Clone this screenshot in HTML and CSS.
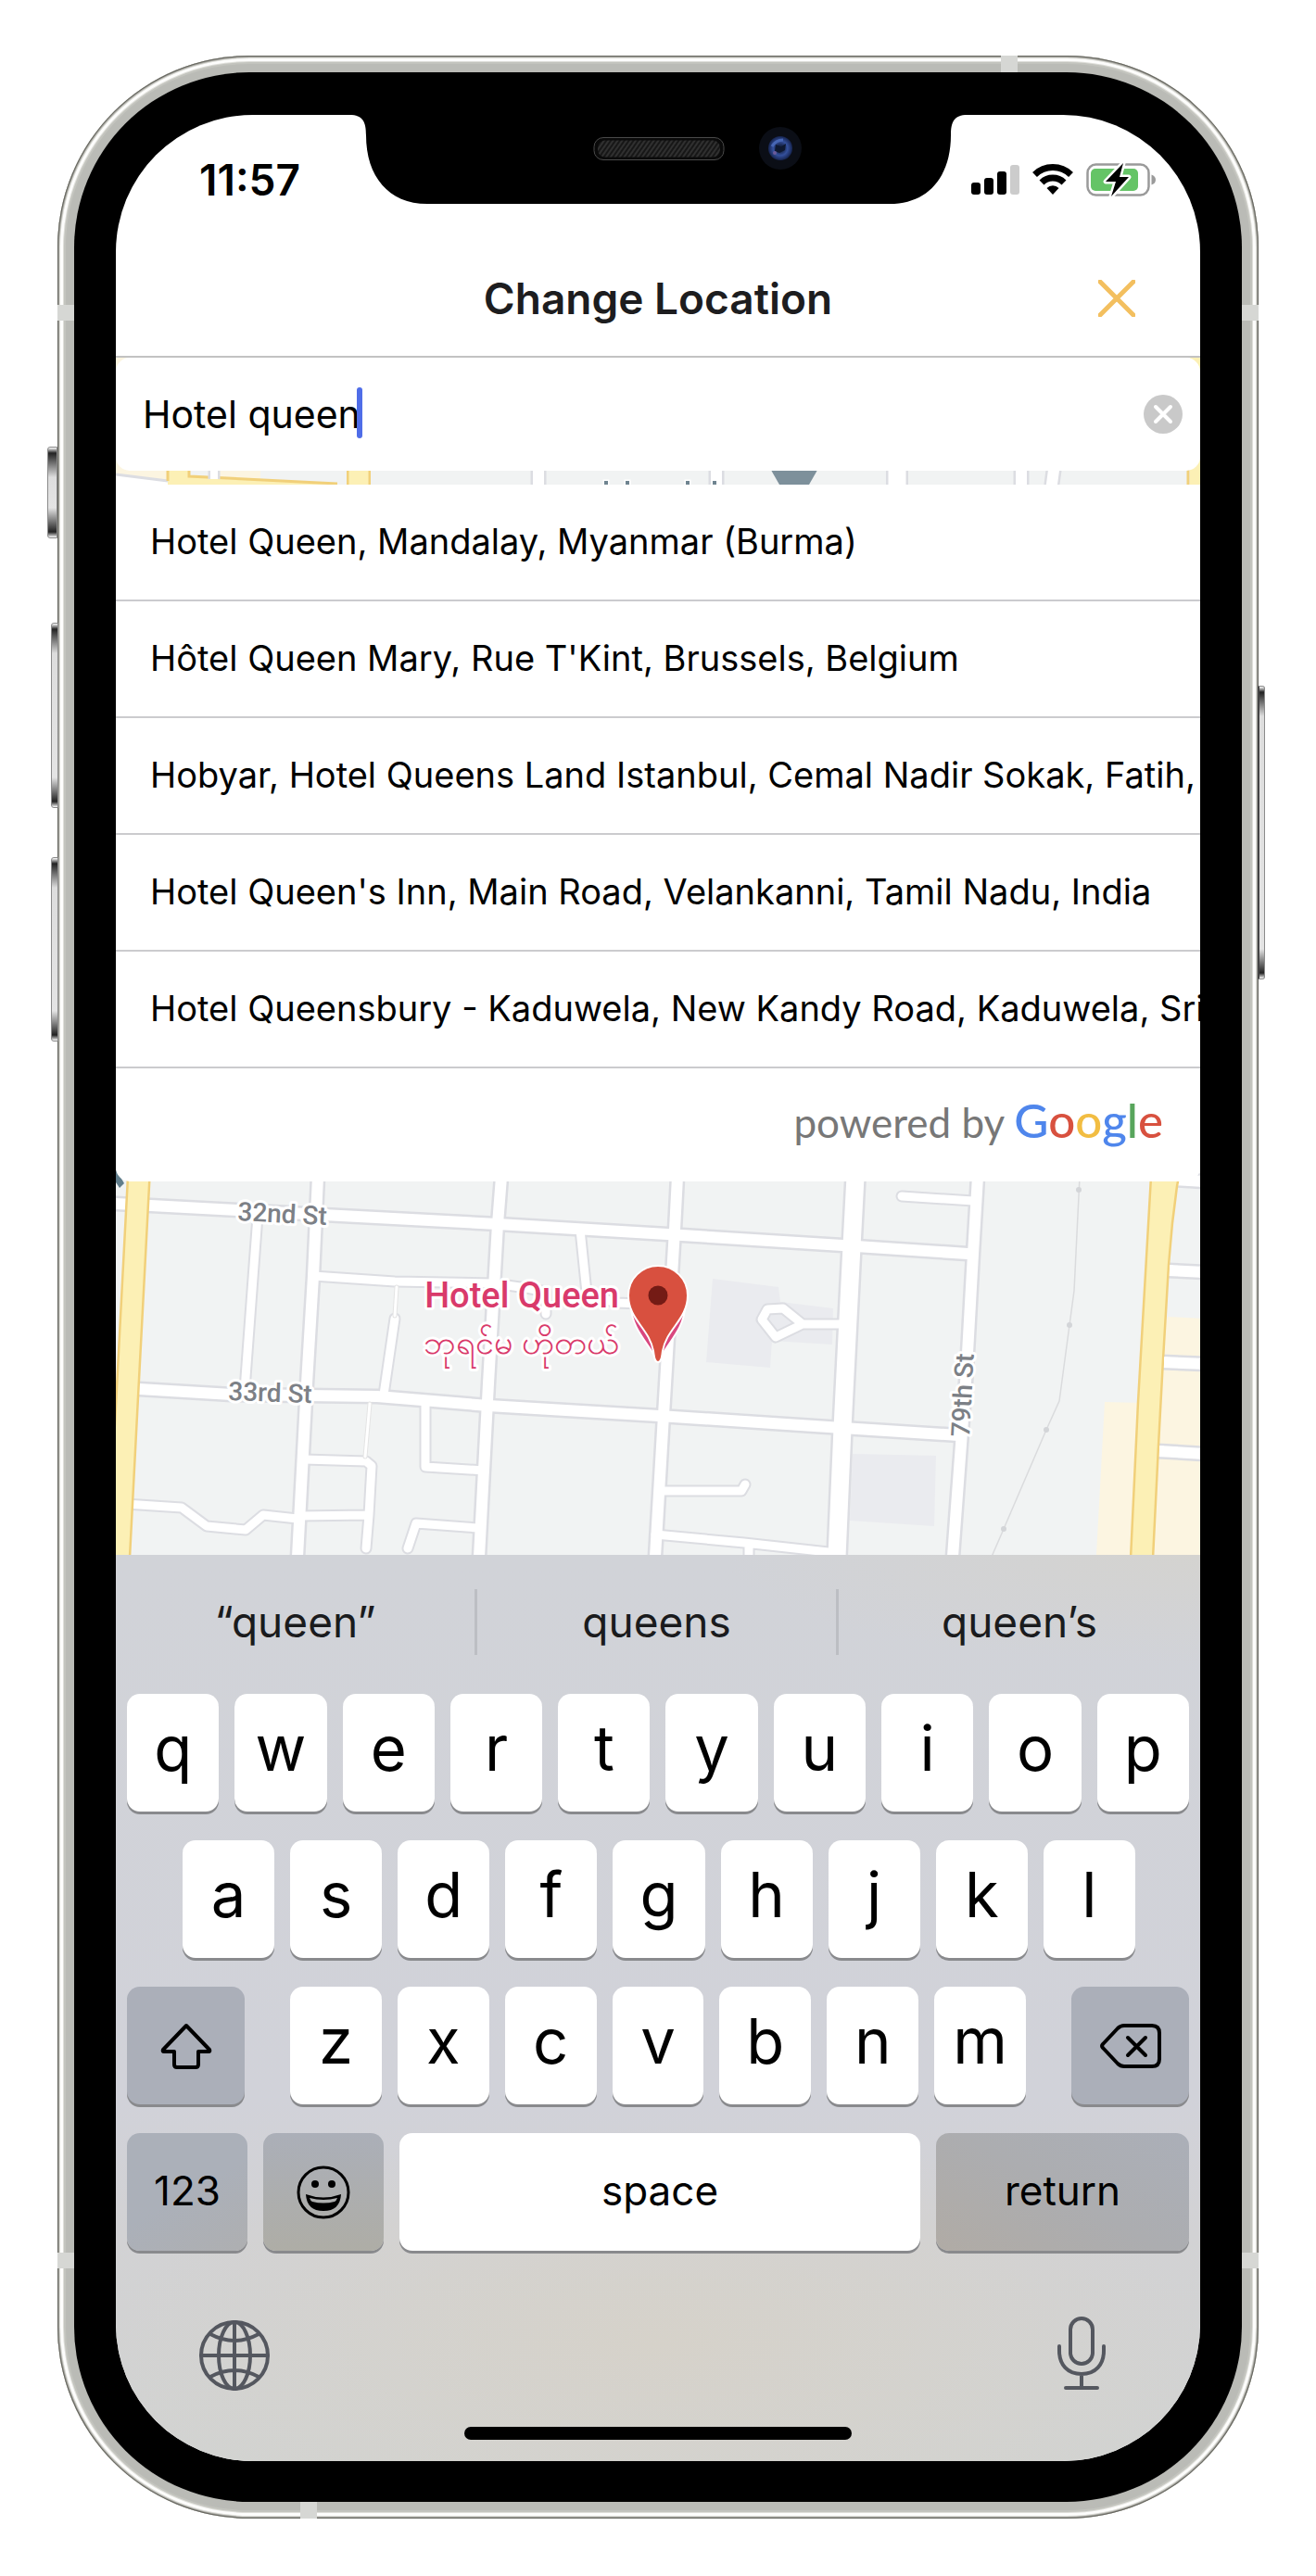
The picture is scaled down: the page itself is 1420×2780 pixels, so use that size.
FILE: index.html
```html
<!DOCTYPE html>
<html lang="en">
<head>
<meta charset="utf-8">
<meta name="viewport" content="width=device-width, initial-scale=1">
<title>Change Location</title>
<link rel="stylesheet" href="styles.css">
</head>
<body>
<div class="phone">
  <span class="side-button mute"></span>
  <span class="side-button volume-up"></span>
  <span class="side-button volume-down"></span>
  <span class="side-button power"></span>
  <span class="antenna antenna-side left upper"></span>
  <span class="antenna antenna-side right upper"></span>
  <span class="antenna antenna-side left lower"></span>
  <span class="antenna antenna-side right lower"></span>
  <span class="antenna antenna-top"></span>
  <span class="antenna antenna-bottom"></span>
  <div class="bezel">
    <div class="screen">
      <svg class="notch" viewBox="0 0 667 96" aria-hidden="true">
        <defs>
          <pattern id="mesh" width="4" height="4" patternUnits="userSpaceOnUse" patternTransform="rotate(35)">
            <rect width="4" height="4" fill="#171717"/><rect width="2" height="4" fill="#303030"/>
          </pattern>
          <radialGradient id="lens"><stop offset="0" stop-color="#16223f"/><stop offset=".3" stop-color="#1c2c58"/><stop offset=".6" stop-color="#34509c"/><stop offset="1" stop-color="#16244f"/></radialGradient>
        </defs>
        <path d="M0 -2V0C15 0 18 8 18 22C18 66 42 96 84 96H583C625 96 649 66 649 22C649 8 652 0 667 0V-2Z"/>
        <rect x="264" y="24.500" width="140" height="24" rx="10" fill="#0a0a0a" stroke="#4a4a4a"/>
        <rect x="268" y="27.500" width="132" height="18" rx="8" fill="url(#mesh)"/>
        <circle cx="465" cy="36" r="23" fill="#0b0e16"/>
        <circle cx="465" cy="36" r="13" fill="url(#lens)"/>
        <path d="M460 32L466 34L471 31L470 38L464 41L459 39Z" fill="#0e1830"/>
        <path d="M456 34Q460 27 468 27" fill="none" stroke="#4766b4" stroke-width="3"/>
        <circle cx="459" cy="41" r="2" fill="#6b5a9a"/>
      </svg>

      <div class="status-bar">
        <time class="clock">11:57</time>
        <svg class="status-icons" viewBox="0 0 200 36" role="img" aria-label="Signal, Wi-Fi, battery charging">
          <rect x="0" y="21" width="10" height="13" rx="3"/>
          <rect x="14" y="16" width="10" height="18" rx="3"/>
          <rect x="28" y="9" width="10" height="25" rx="3"/>
          <rect x="42" y="2" width="10" height="32" rx="3" fill="#ccc"/>
          <g fill="none" stroke="#000" stroke-width="7">
            <path d="M68.500 12.500A28 28 0 0 1 107.500 12.500"/>
            <path d="M76 21A17 17 0 0 1 100 21"/>
          </g>
          <path d="M88 34L81.500 27A9 9 0 0 1 94.500 27Z"/>
          <rect x="125.500" y="1.500" width="66" height="33" rx="9" fill="none" stroke="#9a9a9a" stroke-width="2.500"/>
          <path d="M194.500 12.500Q199 14 199 18T194.500 23.500Z" fill="#9a9a9a"/>
          <rect x="129" y="6" width="51" height="24" rx="5" fill="#65c466"/>
          <path d="M164 0L145 20H156L151 36L170 15H160Z" stroke="#fff" stroke-width="5" stroke-linejoin="round"/>
          <path d="M164 0L145 20H156L151 36L170 15H160Z"/>
        </svg>
      </div>

      <header class="header">
        <h1 class="title">Change Location</h1>
        <button class="close" type="button" aria-label="Close">
          <svg viewBox="0 0 40 40"><path d="M2 2L38 38M38 2L2 38"/></svg>
        </button>
      </header>

      <main class="stage">
        <svg class="map" viewBox="125 386 1170 1292" preserveAspectRatio="xMidYMid slice" role="img" aria-label="Map around Hotel Queen">
          <defs>
            <g id="streets">
              <path d="M125 1299L537 1321L720 1332L909 1344L1044 1353"/>
              <path d="M125 1498L150 1499L250 1505L407 1507L527 1517L711 1528L909 1541L1034 1549"/>
              <path d="M343 1270L338 1377L331 1493L321 1680"/>
              <path d="M541 1270L537 1321L527 1493L517 1680"/>
              <path d="M731 1270L728 1327L716 1527L707 1680"/>
              <path d="M1055 1270L1050 1353L1043 1478L1028 1680"/>
              <path d="M1260 1371L1300 1373M1254 1470L1300 1472M1249 1566L1300 1569"/>
              <path d="M1266 1273L1300 1275"/>
              <path d="M581 500L581 530M773 500L773 530M1102 500L1102 530M1138 500L1134 530"/>
            </g>
            <g id="lanes">
              <path d="M278 1312L264 1500"/>
              <path d="M338 1377L426 1383L533 1385L568 1390L589 1394V1418"/>
              <path d="M626 1327L633 1395L664 1406L724 1408"/>
              <path d="M426 1423L414 1505"/>
              <path d="M328 1575L395 1577L401 1582L398 1635L395 1671M323 1636L397 1635"/>
              <path d="M135 1623L196 1627L223 1647L265 1651L284 1635L321 1639"/>
              <path d="M459 1515L459 1583L522 1587M516 1649L449 1644L440 1671"/>
              <path d="M973 1291L1050 1296"/>
              <path d="M909 1429H866L845 1412L828 1413L822 1424L837 1443L866 1429"/>
              <path d="M711 1609H800L804 1602"/>
              <path d="M707 1656L803 1665L903 1676M808 1668V1682"/>
            </g>
          </defs>
          <rect x="125" y="386" width="1170" height="1292" fill="#f1f3f3"/>
          <path d="M125 386H181V518L125 512ZM236 500H281V530H236Z" fill="#fcf5e1"/>
          <path d="M125 513L181 520V524H125Z" fill="#fff"/>
          <path d="M125 512L181 519" fill="none" stroke="#dcdde2" stroke-width="3"/>
          <path d="M1260 1421L1300 1423V1678H1222V1560ZM1192 1513L1230 1514V1678H1183Z" fill="#fcf5e1"/>
          <path d="M769 1380L840 1389L842 1405L899 1412L898 1451L833 1447L831 1476L762 1470ZM920 1569L1010 1571L1008 1647L917 1641Z" fill="#eaebef"/>
          <g fill="none" stroke-linejoin="round" stroke-linecap="round">
            <use href="#lanes" stroke="#dcdde2" stroke-width="13"/>
            <use href="#streets" stroke="#dcdde2" stroke-width="17"/>
            <path d="M923 1270L919 1345L909 1541L903 1680M968 500V530" stroke="#dcdde2" stroke-width="24"/>
            <use href="#lanes" stroke="#fff" stroke-width="9"/>
            <use href="#streets" stroke="#fff" stroke-width="12"/>
            <path d="M923 1270L919 1345L909 1541L903 1680M968 500V530" stroke="#fff" stroke-width="19"/>
            <path d="M428 1389L426 1420M399 1515L394 1572" stroke="#e4e4e4" stroke-width="5"/>
            <path d="M428 1389L426 1420M399 1515L394 1572" stroke="#fff" stroke-width="3"/>
            <path d="M1165 1270L1159 1393L1154 1430L1143 1512L1129 1543L1083 1650L1070 1680" stroke="#dadbdd" stroke-width="1.500"/>
            <path d="M150 1265L138 1493L128 1685M387 500V530" stroke="#f1d07a" stroke-width="26"/>
            <path d="M150 1265L138 1493L128 1685M387 500V530" stroke="#fcf0b5" stroke-width="21"/>
          </g>
          <path d="M1242 1270H1272L1270 1280L1265 1320L1261 1365L1255 1467L1250 1560L1244 1682H1220L1228 1513Z" fill="#fcf0b5"/>
          <path d="M1242 1270L1228 1513L1220 1682M1272 1270L1270 1280L1265 1320L1261 1365L1255 1467L1250 1560L1244 1682" fill="none" stroke="#f1d07a" stroke-width="2.500"/>
          <path d="M1262 1371H1266M1256 1470H1260M1251 1566H1256" stroke="#fff" stroke-width="11"/>
          <path d="M181 500H203V514L364 523H181Z" fill="#fcf0b5"/>
          <path d="M181 500V519M204 500V514L364 522M1282 500V530" fill="none" stroke="#f1d07a" stroke-width="3"/>
          <path d="M231 500V517" stroke="#dcdde2" stroke-width="13"/>
          <path d="M231 500V517" stroke="#fff" stroke-width="8"/>
          <path d="M1284 380H1295V530H1284Z" fill="#fcf0b5"/>
          <path d="M825 495L841 523H873L889 495Z" fill="#7d909b"/>
          <path d="M652 519h4v6h-4zM675 519h4v6h-4zM740 519h4v6h-4zM769 519h4v6h-4z" fill="#6f8490" stroke="#fff" stroke-width="3" paint-order="stroke"/>
          <path d="M125 1262L134 1277L129 1282L125 1276Z" fill="#607d8b"/>
          <g fill="#d3d5d8"><circle cx="1164" cy="1284" r="3"/><circle cx="1154" cy="1430" r="3"/><circle cx="1129" cy="1543" r="3"/><circle cx="1083" cy="1650" r="3"/></g>
          <g class="street-name">
            <text x="256" y="1317" transform="rotate(3 256 1317)">32nd St</text>
            <text x="246" y="1511" transform="rotate(2 246 1511)">33rd St</text>
            <text x="1046" y="1551" transform="rotate(-87 1046 1551)">79th St</text>
          </g>
          <text class="place-name" x="668" y="1411">Hotel Queen</text>
          <text class="place-name local" x="668" y="1461">ဘုရင်မ ဟိုတယ်</text>
          <path d="M681 1410C681 1432 698 1448 706 1463H714C722 1448 739 1432 739 1410Z" fill="#d9477f" stroke="#fff" stroke-width="2"/>
          <path d="M710 1470C706 1470 706 1464 705 1458C701 1434 678 1424 678 1398A32 32 0 0 1 742 1398C742 1424 719 1434 715 1458C714 1464 714 1470 710 1470Z" fill="#d8503f" stroke="#fff" stroke-width="2"/>
          <circle cx="710" cy="1398" r="10.500" fill="#741b15"/>
        </svg>

        <form class="search">
          <input class="search-input" type="text" value="Hotel queen" aria-label="Search location">
          <span class="caret"></span>
          <button class="clear" type="button" aria-label="Clear text">
            <svg viewBox="0 0 44 44"><circle cx="22" cy="22" r="21"/><path d="M14 14L30 30M30 14L14 30"/></svg>
          </button>
        </form>

        <div class="results">
          <ul class="result-list">
            <li><button class="result" type="button">Hotel Queen, Mandalay, Myanmar (Burma)</button></li>
            <li><button class="result" type="button">Hôtel Queen Mary, Rue T'Kint, Brussels, Belgium</button></li>
            <li><button class="result" type="button">Hobyar, Hotel Queens Land Istanbul, Cemal Nadir Sokak, Fatih, Turkey</button></li>
            <li><button class="result" type="button">Hotel Queen's Inn, Main Road, Velankanni, Tamil Nadu, India</button></li>
            <li><button class="result" type="button">Hotel Queensbury - Kaduwela, New Kandy Road, Kaduwela, Sri Lanka</button></li>
          </ul>
          <p class="powered">powered by <span class="brand"><span class="b">G</span><span class="r">o</span><span class="y">o</span><span class="b">g</span><span class="g">l</span><span class="r">e</span></span></p>
        </div>
      </main>

      <section class="keyboard" aria-label="Keyboard">
        <div class="predictions">
          <button type="button">“queen”</button>
          <button type="button">queens</button>
          <button type="button">queen’s</button>
        </div>
        <div class="keys">
          <div class="row">
            <button class="key" type="button">q</button><button class="key" type="button">w</button><button class="key" type="button">e</button><button class="key" type="button">r</button><button class="key" type="button">t</button><button class="key" type="button">y</button><button class="key" type="button">u</button><button class="key" type="button">i</button><button class="key" type="button">o</button><button class="key" type="button">p</button>
          </div>
          <div class="row home-row">
            <button class="key" type="button">a</button><button class="key" type="button">s</button><button class="key" type="button">d</button><button class="key" type="button">f</button><button class="key" type="button">g</button><button class="key" type="button">h</button><button class="key" type="button">j</button><button class="key" type="button">k</button><button class="key" type="button">l</button>
          </div>
          <div class="row shift-row">
            <button class="key dark" type="button" aria-label="Shift">
              <svg width="56" height="50" viewBox="0 0 56 50"><path d="M28 3L53 29Q54 31 52 31H41V45Q41 48 38 48H18Q15 48 15 45V31H4Q2 31 3 29Z"/></svg>
            </button>
            <div class="row letters">
              <button class="key" type="button">z</button><button class="key" type="button">x</button><button class="key" type="button">c</button><button class="key" type="button">v</button><button class="key" type="button">b</button><button class="key" type="button">n</button><button class="key" type="button">m</button>
            </div>
            <button class="key dark" type="button" aria-label="Delete">
              <svg width="66" height="50" viewBox="0 0 66 50"><path d="M26 3H56Q64 3 64 11V39Q64 47 56 47H26Q22 47 19 44L3 27Q1 25 3 23L19 6Q22 3 26 3ZM30 16L49 35M49 16L30 35"/></svg>
            </button>
          </div>
          <div class="row bottom-row">
            <button class="key dark word" type="button">123</button>
            <button class="key dark" type="button" aria-label="Emoji">
              <svg width="58" height="58" viewBox="0 0 58 58"><circle cx="29" cy="29" r="27" stroke-width="3"/><g class="solid"><ellipse cx="20" cy="20" rx="4" ry="4"/><ellipse cx="38" cy="20" rx="4" ry="4"/><path fill-rule="evenodd" d="M10 31Q29 38 48 31Q47 49 29 49T10 31ZM14 35Q15 38 17 39Q29 42 41 39Q43 38 44 35Q29 39 14 35Z"/></g></svg>
            </button>
            <button class="key word" type="button">space</button>
            <button class="key dark word" type="button">return</button>
          </div>
        </div>
        <div class="tools">
          <button type="button" aria-label="Next keyboard">
            <svg width="78" height="78" viewBox="0 0 78 78"><circle cx="39" cy="39" r="36"/><ellipse cx="39" cy="39" rx="17" ry="36"/><path d="M39 3V75M3 39H75M13 16Q39 30 65 16M13 62Q39 48 65 62"/></svg>
          </button>
          <button type="button" aria-label="Dictation">
            <svg width="56" height="82" viewBox="0 0 56 82"><rect x="16" y="3" width="24" height="49" rx="12"/><path d="M4 33V38C4 53 13 63 28 63S52 53 52 38V33M28 63V78M11 78H45"/></svg>
          </button>
        </div>
        <div class="home-indicator"></div>
      </section>
    </div>
  </div>
</div>
</body>
</html>
```
FILE: styles.css
```css
* { box-sizing: border-box; }

body {
  margin: 0;
  padding: 60px 62px 62px;
  background: #fff;
  color: #000;
  font-family: Inter, "Liberation Sans", sans-serif;
}

button, input {
  margin: 0;
  padding: 0;
  border: 0;
  background: none;
  color: inherit;
  font: inherit;
}

/* Device body */
.phone {
  position: relative;
  padding: 18px;
  border-radius: 207px;
  background: #babbb6;
  box-shadow:
    inset 0 0 0 1px #66665f,
    inset 0 0 0 2px #a3a39d,
    inset 0 0 0 3px #d9d9d4,
    inset 0 0 0 6px #fdfdfc,
    inset 0 0 0 7px #deded9,
    inset 0 0 0 9px #c3c4be;
}

.side-button {
  position: absolute;
  width: 8px;
  left: -7px;
  border: 1px solid #8b8b8b;
  border-radius: 3px 0 0 3px;
  background: linear-gradient(#fff 0, #222 6px, #ddd 32px, #e4e4e4 calc(100% - 32px), #222 calc(100% - 6px), #fff 100%);
}
.mute { left: -11px; width: 11px; top: 422px; height: 99px; }
.volume-up { top: 612px; height: 200px; }
.volume-down { top: 865px; height: 199px; }
.power { left: auto; right: -7px; top: 680px; height: 317px; border-radius: 0 3px 3px 0; border-left: 2px solid #444; }

.antenna { position: absolute; background: #d6d7d4; }
.antenna-side { width: 18px; height: 17px; }
.left { left: 0; }
.right { right: 0; }
.upper { top: 269px; }
.lower { bottom: 270px; }
.antenna-top { top: 0; right: 260px; width: 18px; height: 18px; }
.antenna-bottom { bottom: 0; left: 262px; width: 18px; height: 18px; }

.bezel {
  padding: 46px 45px 44px;
  border-radius: 189px;
  background: #000;
}

.screen {
  position: relative;
  overflow: hidden;
  border-radius: 148px;
  background: #fff;
}

.notch {
  position: absolute;
  top: 0;
  left: 50%;
  width: 667px;
  height: 96px;
  margin-left: -333px;
}

/* Status bar and header */
.status-bar {
  display: flex;
  align-items: center;
  justify-content: space-between;
  height: 136px;
  padding: 4px 47px 0 90px;
}
.clock { font-size: 46px; font-weight: 600; line-height: 52px; }
.status-icons { width: 200px; height: 36px; overflow: visible; }

.header {
  display: grid;
  grid-template-columns: 1fr auto 1fr;
  align-items: center;
  height: 126px;
  padding: 0 70px;
  border-bottom: 2px solid #c2c2c2;
}
.title {
  grid-column: 2;
  margin: 0;
  color: #1d1d1f;
  font-size: 46px;
  font-weight: 600;
  line-height: 56px;
}
.close { justify-self: end; width: 40px; height: 40px; }
.close svg { display: block; fill: none; stroke: #f3bf5f; stroke-width: 5; stroke-linecap: round; }

/* Map with the search box and results over it */
.stage { position: relative; padding-bottom: 403px; }
.map { position: absolute; inset: 0; width: 100%; height: 100%; }

.street-name, .place-name {
  font-family: Roboto, "Noto Sans", sans-serif;
  paint-order: stroke;
  stroke: #fff;
  stroke-width: 6px;
  stroke-linejoin: round;
}
.street-name { fill: #7c8086; font-size: 28px; font-weight: 500; }
.place-name { fill: #d93a6b; font-size: 38px; font-weight: 500; text-anchor: end; }
.local { font-size: 36px; }

.search {
  position: relative;
  display: flex;
  align-items: center;
  height: 122px;
  padding: 0 18px 0 29px;
  border-radius: 15px;
  background: #fff;
}
.search-input { flex: 1; min-width: 0; height: 100%; outline: 0; font-size: 41px; }
.caret {
  position: absolute;
  top: 32px;
  left: 260px;
  width: 6px;
  height: 55px;
  border-radius: 3px;
  background: #4f6de8;
}
.clear { width: 44px; height: 44px; }
.clear svg { display: block; }
.clear circle { fill: #c9c9c9; }
.clear path { stroke: #fff; stroke-width: 4; stroke-linecap: round; }

.results {
  position: relative;
  margin-top: 15px;
  overflow: hidden;
  border-radius: 0 0 15px 15px;
  background: #fff;
}
.result-list { margin: 0; padding: 0; list-style: none; }
.result {
  display: block;
  width: 100%;
  height: 126px;
  padding: 0 0 3px 37px;
  border-bottom: 2px solid #cbcbce;
  overflow: hidden;
  font-size: 38px;
  line-height: 48px;
  text-align: left;
  white-space: nowrap;
}
.powered {
  height: 122px;
  margin: 0;
  padding: 0 40px;
  color: #777;
  font-family: Lato, sans-serif;
  font-size: 44px;
  line-height: 112px;
  text-align: right;
}
.brand { font-size: 51px; font-weight: 500; }
.b { color: #4f86ec; }
.r { color: #d8513f; }
.y { color: #f2bd42; }
.g { color: #58a55c; }

/* Keyboard */
.keyboard {
  padding-bottom: 23px;
  background:
    radial-gradient(ellipse 50% 24% at 50% 87%, #d6d2ca 0, rgba(214, 210, 203, 0) 100%),
    radial-gradient(ellipse 44% 12% at 100% 0, #d4d3d0 0, rgba(212, 211, 208, 0) 100%),
    linear-gradient(#d1d3d8 0, #d1d2d9 60%, #d2d2d4 75%, #d2d3d1 100%);
}

.predictions {
  display: grid;
  grid-template-columns: repeat(3, 1fr);
  padding: 37px 0 42px;
}
.predictions button {
  height: 71px;
  padding-bottom: 2px;
  color: #1a1b1d;
  font-size: 46px;
  line-height: 56px;
}
.predictions button:not(:last-child) { border-right: 3px solid #bcbec3; }

.keys { display: grid; gap: 31px; padding: 0 12px; }
.row { display: flex; gap: 17px; }
.home-row { padding: 0 58px 0 60px; }
.shift-row { gap: 49px; }
.shift-row > .key { flex: none; width: 127px; }
.letters { flex: 1; }
.key {
  display: flex;
  flex: 1 1 0;
  align-items: center;
  justify-content: center;
  min-width: 0;
  height: 127px;
  padding-bottom: 10px;
  border-radius: 14px;
  background: #fff;
  box-shadow: 0 3px 0 #898a8d;
  font-size: 67px;
  line-height: 80px;
}
.dark { padding-bottom: 0; background: #abafb9; }
.key svg, .tools svg {
  display: block;
  fill: none;
  stroke: #000;
  stroke-width: 4;
  stroke-linecap: round;
  stroke-linejoin: round;
}
.key .solid { fill: #000; stroke: none; }
.word { padding-bottom: 4px; font-size: 44px; line-height: 54px; }
.bottom-row .key:nth-child(1) { flex-grow: 130; background: linear-gradient(150deg, #abb0b9 50%, #aeafb1); }
.bottom-row .key:nth-child(2) { flex-grow: 130; background: linear-gradient(#abafb8, #aeada6); }
.bottom-row .key:nth-child(3) { flex-grow: 562; }
.bottom-row .key:nth-child(4) { flex-grow: 273; background: linear-gradient(30deg, #b0aba5, #acadb0 50%, #abafb8); }

.tools {
  display: flex;
  align-items: flex-end;
  justify-content: space-between;
  padding: 70px 100px 38px 89px;
}
.tools svg { stroke: #54575f; stroke-width: 4; }

.home-indicator {
  width: 418px;
  height: 14px;
  margin: 0 auto;
  border-radius: 7px;
  background: #000;
}
```
